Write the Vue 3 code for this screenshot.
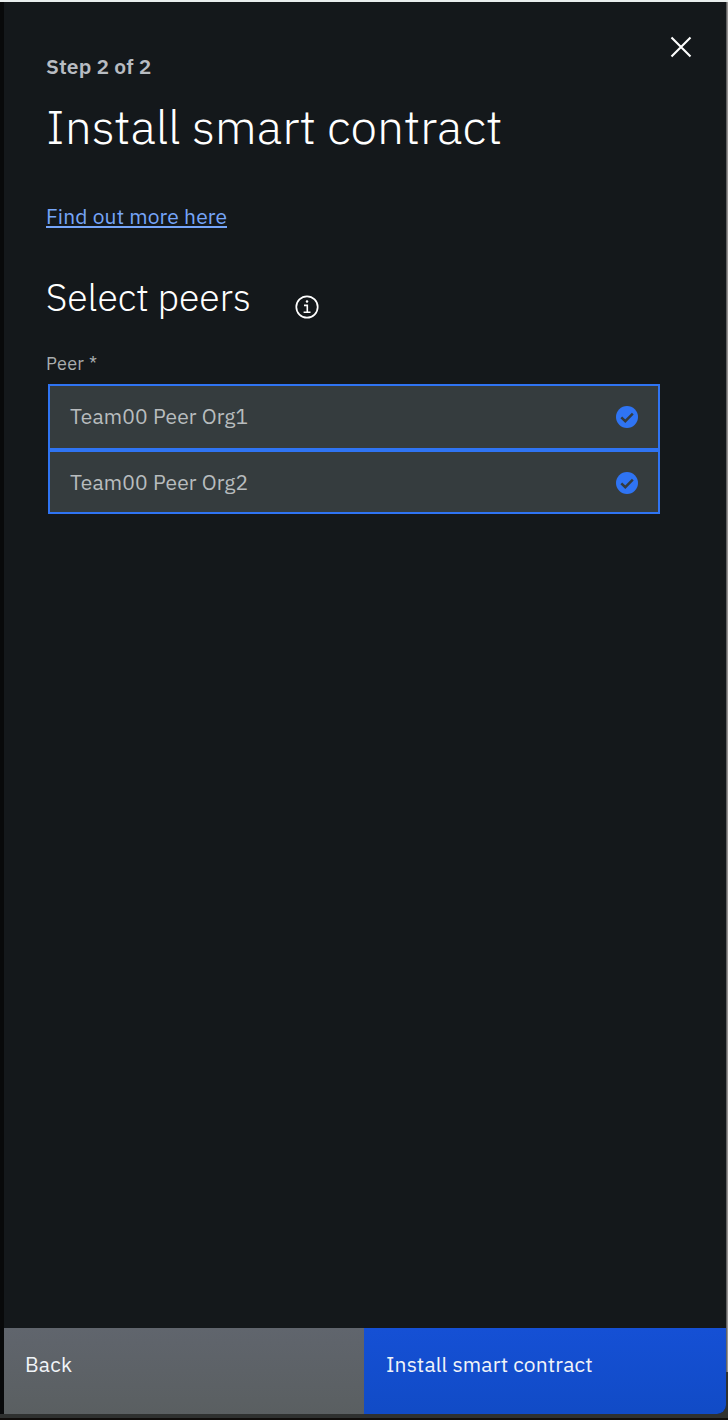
<script setup>
const peers = ['Team00 Peer Org1', 'Team00 Peer Org2']
</script>

<template>
  <div class="screen">
    <section class="panel">
      <header class="head">
        <div class="titles">
          <p class="step">Step 2 of 2</p>
          <h1>Install smart contract</h1>
        </div>
        <button class="close" aria-label="Close">
          <svg width="22" height="22" viewBox="0 0 22 22"><path d="M1.5 1.5 20.500 20.500M20.500 1.500 1.500 20.500" stroke="#fff" stroke-width="2.100" fill="none" /></svg>
        </button>
      </header>
      <main>
        <a class="more">Find out more here</a>
        <div class="subhead">
          <h2>Select peers</h2>
          <svg class="info" width="24" height="24" viewBox="0 0 24 24">
            <circle cx="12" cy="12" r="10.700" fill="none" stroke="#fff" stroke-width="1.700" />
            <path d="M9 10.400h3.300v6.700M8.600 17.300h6.900" fill="none" stroke="#fff" stroke-width="1.600" />
            <circle cx="12" cy="6.400" r="1.250" fill="#fff" />
          </svg>
        </div>
        <p class="label">Peer *</p>
        <div class="list">
          <div v-for="peer in peers" :key="peer" class="peer">
            <span>{{ peer }}</span>
            <svg width="22" height="22" viewBox="0 0 22 22">
              <circle cx="11" cy="11" r="11" fill="#2f74f3" />
              <path d="M5.300 11.300 9.300 15.200 16.800 7.700" fill="none" stroke="#353c3e" stroke-width="2.500" />
            </svg>
          </div>
        </div>
      </main>
      <footer>
        <button class="back"><span>Back</span></button>
        <button class="install"><span>Install smart contract</span></button>
      </footer>
    </section>
    <div class="edge"></div>
  </div>
</template>

<style>
body { background: #100d0b; }
</style>

<style scoped>
.screen {
  box-sizing: border-box;
  width: 728px;
  height: 1420px;
  display: grid;
  grid-template-columns: 722px 2px;
  border-top: 2px solid #b6b9bb;
  border-image: linear-gradient(#e9eeee 50%, #8d9091 50%) 2;
  padding-left: 4px;
  padding-bottom: 6px;
  background:
    linear-gradient(#2f3130, #2f3130) 0 1412px / 100% 4px no-repeat,
    linear-gradient(#2f3130, #2f3130) 100% 1370px / 20px 44px no-repeat,
    linear-gradient(#100d0b, #100d0b) 0 1416px / 100% 2px no-repeat,
    #08090a;
  font-family: "IBM Plex Sans", Inter, sans-serif;
}
.panel {
  display: flex;
  flex-direction: column;
  height: 1412px;
  background: #14181b;
  border-radius: 0 0 9px 0;
  overflow: hidden;
}
.edge {
  height: 1370px;
  background: linear-gradient(90deg, #656565 50%, #969393 50%);
}
.head {
  display: flex;
  justify-content: space-between;
  padding: 50px 34px 0 42px;
}
p, h1, h2 { margin: 0; }
.step {
  font-size: 21px;
  line-height: 28px;
  font-weight: 600;
  color: #b8bcc2;
  letter-spacing: 0.14px;
}
h1 {
  margin-top: 16px;
  font-size: 48px;
  line-height: 60px;
  font-weight: 300;
  color: #fff;
  letter-spacing: -0.02px;
  white-space: nowrap;
}
button {
  border: 0;
  padding: 0;
  font-family: inherit;
}
.close { background: none; height: 22px; margin-top: -16px; }
.close svg { display: block; }
main { flex: 1; padding: 46px 66px 0 42px; }
.more {
  display: inline-block;
  height: 26px;
  box-sizing: border-box;
  line-height: 28px;
  font-size: 21px;
  letter-spacing: 0.13px;
  color: #76a5f9;
  border-bottom: 2px solid #76a5f9;
  white-space: nowrap;
}
.subhead { display: flex; gap: 45px; margin-top: 40px; height: 57px; }
h2 {
  width: 204px;
  margin-top: 1px;
  white-space: nowrap;
  font-size: 37.5px;
  line-height: 56px;
  letter-spacing: -0.06px;
  font-weight: 300;
  color: #fff;
}
.info { margin-top: 27px; }
.label {
  margin-top: 27px;
  font-size: 18px;
  line-height: 24px;
  letter-spacing: 0.35px;
  color: #a9adaf;
}
.list { margin: 8px 0 0 2px; }
.peer {
  box-sizing: border-box;
  height: 66px;
  border: 2px solid #2f74f3;
  display: flex;
  align-items: center;
  justify-content: space-between;
  padding: 0 20px;
  background: #353c3e;
  color: #b8bcbe;
  font-size: 21px;
  letter-spacing: 0.16px;
}
.peer span { padding-bottom: 2px; }
.peer + .peer { height: 64px; padding-top: 2px; }
footer { display: flex; height: 86px; }
footer button {
  color: #f1f4f8;
  font-size: 21px;
  letter-spacing: 0.15px;
  text-align: left;
  padding: 0 0 15px 22px;
}
.back { width: 360px; padding-left: 21px; background: linear-gradient(#60656d, #5a5f61); }
.install { width: 362px; background: linear-gradient(#1550d5, #114bc6); }
</style>
